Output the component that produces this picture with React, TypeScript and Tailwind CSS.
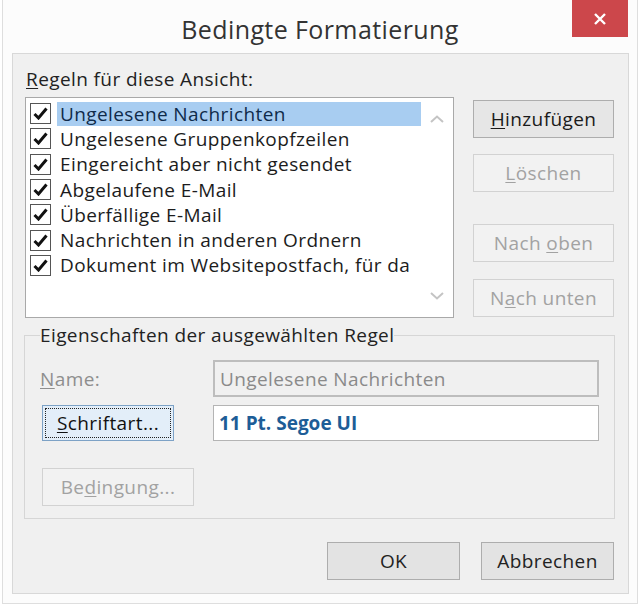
import React from "react";

const font = { fontFamily: '"Open Sans", "Noto Sans", sans-serif' };

function Check() {
  return (
    <div className="w-[21px] h-[21px] border border-[#555] bg-white flex items-center justify-center shrink-0">
      <svg width="15" height="13" viewBox="0 0 15 13">
        <path d="M1.5 7 L5.5 11 L13.5 1.5" fill="none" stroke="#111" strokeWidth="3" />
      </svg>
    </div>
  );
}

const rules = [
  "Ungelesene Nachrichten",
  "Ungelesene Gruppenkopfzeilen",
  "Eingereicht aber nicht gesendet",
  "Abgelaufene E-Mail",
  "Überfällige E-Mail",
  "Nachrichten in anderen Ordnern",
  "Dokument im Websitepostfach, für da",
];

function DisabledBtn({ children, className }: { children: React.ReactNode; className?: string }) {
  return (
    <div
      className={
        "border border-[#d2d2d2] bg-[#f2f2f2] text-[#a2a2a2] flex items-center justify-center " +
        (className ?? "")
      }
    >
      {children}
    </div>
  );
}

export default function App() {
  return (
    <div className="w-[640px] h-[607px] bg-white overflow-hidden text-[19px] tracking-[0.4px] leading-[26px]" style={font}>
      <div className="relative ml-[2px] w-[636px] h-[604px] border-x border-b border-[#dedede] bg-[#fcfcfc]">
        {/* title */}
        <div className="h-[53px] flex items-center justify-center">
          <span className="text-[25px] text-[#333] mt-[4px] tracking-[0.4px] leading-[32px] ml-[0px]">Bedingte Formatierung</span>
        </div>
        <div className="absolute left-[569px] top-0 w-[56px] h-[37px] bg-[#cc474b] flex items-center justify-center">
          <svg width="14" height="14" viewBox="0 0 14 14">
            <path d="M2 2 L12 12 M12 2 L2 12" stroke="white" strokeWidth="2.4" />
          </svg>
        </div>

        {/* panel */}
        <div className="ml-[9px] w-[617px] h-[541px] border border-[#d8d8d8] bg-[#f0f0f0] flex flex-col">
          <div className="flex pl-[12px] pt-[12px]">
            <div className="flex flex-col">
              <div className="h-[26px] pl-[1px] text-[#222]">
                <span className="underline underline-offset-2">R</span>egeln für diese Ansicht:
              </div>
              <div className="mt-[5px] w-[429px] h-[221px] border border-[#a9a9a9] bg-white flex">
                <div className="flex-1 pt-[3px] pl-[4px] min-w-0">
                  {rules.map((r, i) => (
                    <div key={r} className="h-[25.3px] flex items-center">
                      <Check />
                      <div
                        className={
                          "ml-[6px] h-[24px] flex items-center pl-[3px] flex-1 whitespace-nowrap overflow-hidden " +
                          (i === 0 ? "bg-[#a8cdf1] text-[#0f2b4a]" : "text-[#1c1c1c]")
                        }
                      >
                        {r}
                      </div>
                    </div>
                  ))}
                </div>
                <div className="w-[32px] flex flex-col items-center justify-between py-[17px]">
                  <svg width="14" height="8" viewBox="0 0 14 8">
                    <path d="M1 7 L7 1.5 L13 7" fill="none" stroke="#c4c4c4" strokeWidth="2" />
                  </svg>
                  <svg width="14" height="8" viewBox="0 0 14 8">
                    <path d="M1 1 L7 6.5 L13 1" fill="none" stroke="#c4c4c4" strokeWidth="2" />
                  </svg>
                </div>
              </div>
            </div>
            <div className="ml-[19px] mt-[34px] w-[141px] flex flex-col">
              <div className="h-[38px] border border-[#adadad] bg-[#e6e6e6] text-[#1a1a1a] flex items-center justify-center">
                <span><span className="underline underline-offset-2">H</span>inzufügen</span>
              </div>
              <DisabledBtn className="h-[38px] mt-[16px]">
                <span><span className="underline underline-offset-2">L</span>öschen</span>
              </DisabledBtn>
              <DisabledBtn className="h-[38px] mt-[32px]">
                <span>Nach <span className="underline underline-offset-2">o</span>ben</span>
              </DisabledBtn>
              <DisabledBtn className="h-[38px] mt-[17px]">
                <span>N<span className="underline underline-offset-2">a</span>ch unten</span>
              </DisabledBtn>
            </div>
          </div>

          {/* group */}
          <fieldset className="ml-[11px] mt-[4px] w-[591px] h-[197px] border border-[#d6d6d6] px-[15px]">
            <legend className="text-[#222]">Eigenschaften der ausgewählten Regel</legend>
            <div className="flex items-center mt-[12px]">
              <div className="w-[173px] text-[#8e8e8e]">
                <span className="underline underline-offset-2">N</span>ame:
              </div>
              <div className="w-[386px] h-[37px] border-2 border-[#bdbdbd] bg-[#f0f0f0] text-[#8a8a8a] flex items-center pl-[5px]">
                Ungelesene Nachrichten
              </div>
            </div>
            <div className="flex items-center mt-[8px]">
              <div className="ml-[2px] w-[132px] h-[36px] border border-[#7da2c6] bg-[#e3eef9] p-[2px]">
                <div className="w-full h-full border border-dotted border-[#222] flex items-center justify-center text-[#111]">
                  <span><span className="underline underline-offset-2">S</span>chriftart...</span>
                </div>
              </div>
              <div className="ml-[39px] w-[386px] h-[36px] border border-[#b4b4b4] bg-white flex items-center pl-[5px] font-bold text-[#1d5d97] tracking-[0px]">
                11 Pt. Segoe UI
              </div>
            </div>
            <DisabledBtn className="ml-[2px] mt-[27px] w-[152px] h-[38px]">
              <span>Be<span className="underline underline-offset-2">d</span>ingung...</span>
            </DisabledBtn>
          </fieldset>

          <div className="flex justify-end pr-[14px] mt-[23px] gap-[21px]">
            <div className="w-[133px] h-[38px] border border-[#adadad] bg-[#e3e3e3] text-[#222] flex items-center justify-center">OK</div>
            <div className="w-[133px] h-[38px] border border-[#adadad] bg-[#e3e3e3] text-[#222] flex items-center justify-center">Abbrechen</div>
          </div>
        </div>
      </div>
    </div>
  );
}
